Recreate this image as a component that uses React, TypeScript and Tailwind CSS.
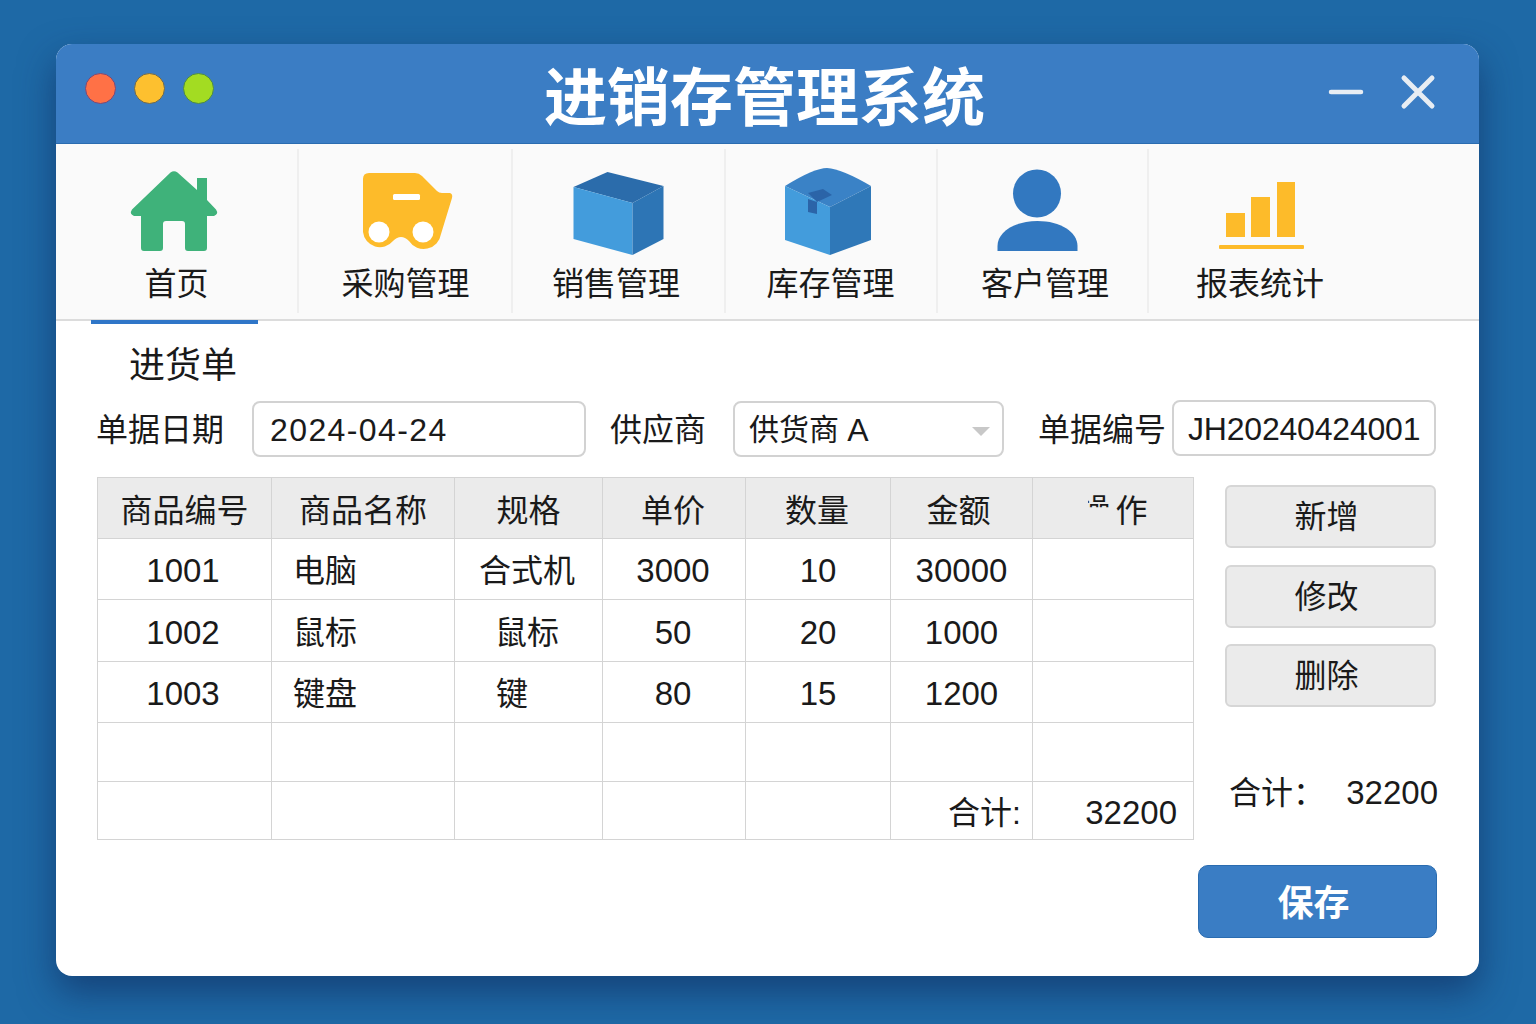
import React from 'react';

const YELLOW = '#fdbb2a';

function HomeIcon() {
  return (
    <svg width="120" height="90" viewBox="117 166 120 90">
      <path
        d="M170.500 172.500Q174 170 177.500 172.500L197 190V178H207V200L216 209.500Q219 214 214 216H207V248Q207 251 204 251H188Q185 251 185 248V224Q185 221 182 221H166Q163 221 163 224V248Q163 251 160 251H144Q141 251 141 248V216H134Q129 214 132 209.500Z"
        fill="#3fb27a"
      />
    </svg>
  );
}

function CartIcon() {
  return (
    <svg width="120" height="90" viewBox="345 166 120 90">
      <path
        d="M369 173H415Q419 173 422 176L437 191Q439 193 442 193H450Q453 194 452 198L441 234A17.500 17.500 0 0 1 409 241Q401 233 393 241A17 17 0 0 1 363 232V179Q363 173 369 173Z"
        fill={YELLOW}
      />
      <rect x="393" y="194" width="27" height="6" rx="1.500" fill="#fff" />
      <circle cx="379" cy="232" r="10.500" fill="#fff" />
      <circle cx="423" cy="232" r="10.500" fill="#fff" />
    </svg>
  );
}

function BoxIcon() {
  return (
    <svg width="120" height="90" viewBox="558.500 166 120 90">
      <path d="M573 187 607 172 663 186 632 203z" fill="#2b6cab" />
      <path d="M573 187 632 203V255L573 239z" fill="#439cdc" />
      <path d="M632 203 663 186V239L632 255z" fill="#2d75b5" />
    </svg>
  );
}

function PackageIcon() {
  return (
    <svg width="120" height="90" viewBox="771 166 120 90">
      <path d="M785 186Q814 168 827 168Q842 169 871 186L830 207z" fill="#3a82c6" />
      <path d="M785 186 830 207V255L785 240z" fill="#439cdc" />
      <path d="M830 207 871 186V240L830 255z" fill="#2f78b8" />
      <path d="M808 193 823 189 832 195 817 202z" fill="#2b64a8" />
      <path d="M808 199 817 202V214L808 212z" fill="#2b64a8" />
    </svg>
  );
}

function UserIcon() {
  return (
    <svg width="120" height="90" viewBox="982.500 166 120 90">
      <circle cx="1036.500" cy="193.500" r="24" fill="#3278c0" />
      <path d="M997 251V246C997 232 1014 221 1037 221C1060 221 1077 232 1077 246V251z" fill="#3278c0" />
    </svg>
  );
}

function ChartIcon() {
  return (
    <svg width="120" height="90" viewBox="1200 166 120 90">
      <rect x="1226" y="213" width="19" height="24" fill={YELLOW} />
      <rect x="1251" y="197" width="19" height="40" fill={YELLOW} />
      <rect x="1277" y="182" width="18" height="55" fill={YELLOW} />
      <rect x="1219" y="245" width="85" height="4" rx="1" fill={YELLOW} />
    </svg>
  );
}

const navItems = [
  { label: '首页', icon: <HomeIcon />, width: 'w-[242px]', labelClass: '-ml-[1px]' },
  { label: '采购管理', icon: <CartIcon />, width: 'w-[214px]', labelClass: 'ml-[1px]' },
  { label: '销售管理', icon: <BoxIcon />, width: 'w-[213px]', labelClass: '-ml-[5px]' },
  { label: '库存管理', icon: <PackageIcon />, width: 'w-[212px]', labelClass: '-ml-[1px]' },
  { label: '客户管理', icon: <UserIcon />, width: 'w-[211px]', labelClass: 'ml-[5px]' },
  { label: '报表统计', icon: <ChartIcon />, width: 'w-[224px]', labelClass: '' },
];

const headers = [
  { label: '商品编号', className: '' },
  { label: '商品名称', className: '' },
  { label: '规格', className: '' },
  { label: '单价', className: 'pr-[2px]' },
  { label: '数量', className: 'pr-[2px]' },
  { label: '金额', className: 'pr-[6px]' },
];

const rows = [
  { code: '1001', name: '电脑', spec: '合式机', price: '3000', qty: '10', amount: '30000', height: 'h-[61px]' },
  { code: '1002', name: '鼠标', spec: '鼠标', price: '50', qty: '20', amount: '1000', height: 'h-[62px]' },
  { code: '1003', name: '键盘', spec: '键', price: '80', qty: '15', amount: '1200', height: 'h-[61px]' },
];

const cell = 'border border-[#d4d4d4] p-0 pt-[4px] text-center font-normal';
const num = 'text-[33px]';

function SideButton({ label, className }: { label: string; className?: string }) {
  return (
    <button className={`h-[63px] w-full rounded-[6px] border-2 border-[#d6d6d6] bg-[#ebebeb] pr-[8px] text-[#1a1a1a] ${className ?? ''}`}>
      {label}
    </button>
  );
}

export default function App() {
  return (
    <div className="h-screen overflow-hidden bg-[#1e69a6] pl-[56px] pt-[44px] font-['Liberation_Sans','Noto_Sans_CJK_SC',sans-serif] text-[32px] leading-[40px] text-[#1a1a1a]">
      <div className="h-[932px] w-[1423px] overflow-hidden rounded-[16px] bg-white shadow-[0_16px_36px_rgba(15,40,90,0.6)]">
        {/* title bar */}
        <div className="flex h-[100px] items-center border-b border-[#2a6cb0] bg-[#3b7dc4]">
          <div className="flex w-[488px] items-center gap-[18px] pb-[11px] pl-[29px]">
            <span className="h-[31px] w-[31px] rounded-full border border-[#7a4a78] bg-[#ff7146]" />
            <span className="h-[31px] w-[31px] rounded-full border border-[#6f6a50] bg-[#fdc02f]" />
            <span className="h-[31px] w-[31px] rounded-full border border-[#4d8a48] bg-[#a3dc22]" />
          </div>
          <h1 className="pt-[8px] text-[63px] font-bold leading-[80px] text-white">进销存管理系统</h1>
          <div className="ml-auto flex items-center gap-[31px] pb-[4px] pr-[39px] text-[#e8edf3]">
            <svg width="38" height="38" viewBox="0 0 38 38">
              <path d="M4 19H34" stroke="currentColor" strokeWidth="4.500" strokeLinecap="round" />
            </svg>
            <svg width="44" height="44" viewBox="0 0 44 44">
              <path d="M8 8 36 36M36 8 8 36" stroke="currentColor" strokeWidth="5" strokeLinecap="round" />
            </svg>
          </div>
        </div>

        {/* nav */}
        <nav className="relative flex h-[177px] border-b-2 border-[#dcdcdc] bg-[#fafafa]">
          {navItems.map((item, i) => (
            <div key={item.label} className={`flex ${item.width} flex-col items-center pt-[22px] ${i < 5 ? 'relative' : ''}`}>
              {item.icon}
              <span className={`mt-[8px] ${item.labelClass}`}>{item.label}</span>
              {i < 5 && <span className="absolute bottom-[6px] right-[-1px] top-[5px] w-[2px] bg-[#efefef]" />}
            </div>
          ))}
          <span className="absolute bottom-[-5px] left-[35px] h-[4px] w-[167px] bg-[#2f76c8]" />
        </nav>

        {/* form */}
        <div className="pl-[41px]">
          <div className="pl-[32px] pt-[25px] text-[36px]">进货单</div>
          <div className="mt-[14px] flex items-center">
            <span className="-ml-[1px] w-[156px] pt-[2px]">单据日期</span>
            <div className="flex h-[56px] w-[334px] items-center rounded-[8px] border-2 border-[#d2d2d2] pl-[16px] pt-[2px] tracking-[1.4px]">2024-04-24</div>
            <span className="ml-[24px] w-[123px] pt-[2px]">供应商</span>
            <div className="relative flex h-[56px] w-[271px] items-center whitespace-pre rounded-[8px] border-2 border-[#d2d2d2] pl-[14px] pt-[2px]">
              <span className="text-[30px]">供货商 </span>A
              <span className="absolute right-[12px] top-[24px] h-0 w-0 border-x-[9px] border-t-[9px] border-x-transparent border-t-[#c8c8c8]" />
            </div>
            <span className="ml-[34px] w-[134px] pt-[2px]">单据编号</span>
            <div className="mb-[2px] flex h-[56px] w-[264px] items-center rounded-[8px] border-2 border-[#d2d2d2] pl-[14px] pt-[2px] tracking-[-0.2px]">JH20240424001</div>
          </div>

          <div className="mt-[19px] flex items-start">
            <table className="w-[1096px] table-fixed border-collapse">
              <colgroup>
                <col className="w-[174px]" />
                <col className="w-[183px]" />
                <col className="w-[148px]" />
                <col className="w-[143px]" />
                <col className="w-[145px]" />
                <col className="w-[142px]" />
                <col className="w-[161px]" />
              </colgroup>
              <thead>
                <tr className="h-[61px] bg-[#ebebeb]">
                  {headers.map((h) => (
                    <th key={h.label} className={`${cell} !pt-[6px] ${h.className}`}>{h.label}</th>
                  ))}
                  <th className={`${cell} !pt-[6px]`}>
                    <span className="relative -top-[1px] mr-[1px] inline-block [clip-path:inset(0_0_57%_30%)]">操</span>
                    <span className="ml-[4px]">作</span>
                  </th>
                </tr>
              </thead>
              <tbody>
                {rows.map((r) => (
                  <tr key={r.code} className={r.height}>
                    <td className={`${cell} ${num} pr-[3px]`}>{r.code}</td>
                    <td className={`${cell} !pl-[21px] !text-left`}>{r.name}</td>
                    <td className={`${cell} pr-[3px]`}>{r.spec === '键' ? <span className="mr-[30px]">{r.spec}</span> : r.spec}</td>
                    <td className={`${cell} ${num} pr-[2px]`}>{r.price}</td>
                    <td className={`${cell} ${num}`}>{r.qty}</td>
                    <td className={`${cell} ${num}`}>{r.amount}</td>
                    <td className={cell} />
                  </tr>
                ))}
                <tr className="h-[59px]">
                  {[0, 1, 2, 3, 4, 5, 6].map((n) => (
                    <td key={n} className={cell} />
                  ))}
                </tr>
                <tr className="h-[58px]">
                  {[0, 1, 2, 3, 4].map((n) => (
                    <td key={n} className={cell} />
                  ))}
                  <td className={`${cell} !pr-[11px] !text-right`}>合计:</td>
                  <td className={`${cell} ${num} !pr-[16px] !text-right`}>32200</td>
                </tr>
              </tbody>
            </table>

            <div className="ml-[31px] flex w-[211px] flex-col pt-[8px]">
              <SideButton label="新增" />
              <SideButton label="修改" className="mt-[17px]" />
              <SideButton label="删除" className="mt-[16px]" />
              <div className="mt-[66px] flex justify-between whitespace-nowrap pl-[4px]">
                <span>合计：</span>
                <span className={`${num} -mr-[2px]`}>32200</span>
              </div>
            </div>
          </div>

          <div className="mt-[25px] flex justify-end pr-[42px]">
            <button className="h-[73px] w-[239px] rounded-[10px] border border-[#2a6cb0] bg-[#3a7dc4] pr-[8px] pt-[4px] text-[36px] font-bold text-white">保存</button>
          </div>
        </div>
      </div>
    </div>
  );
}
